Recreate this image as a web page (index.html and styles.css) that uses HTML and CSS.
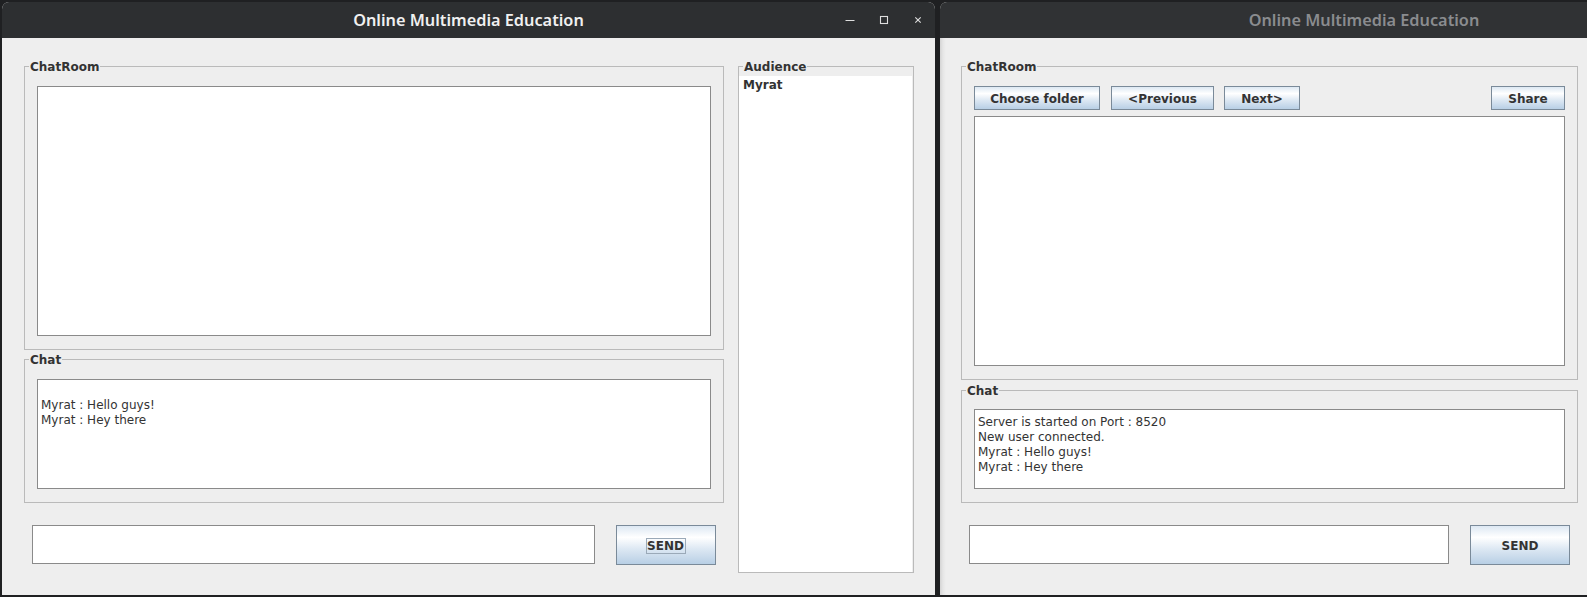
FILE: index.html
```html
<!DOCTYPE html>
<html lang="en">
<head>
<meta charset="utf-8">
<title>Online Multimedia Education</title>
<link rel="stylesheet" href="styles.css">
</head>
<body>
<div class="desktop">
  <section class="window active">
    <header class="titlebar">
      <span class="title">Online Multimedia Education</span>
      <div class="controls">
        <span class="ctl"><svg width="12" height="12" viewBox="0 0 12 12"><path d="M1.5 6.5h9" stroke="#dedede" stroke-width="1.2"/></svg></span>
        <span class="ctl"><svg width="12" height="12" viewBox="0 0 12 12"><rect x="2.5" y="2.5" width="7" height="7" fill="none" stroke="#dedede" stroke-width="1.1"/></svg></span>
        <span class="ctl"><svg width="12" height="12" viewBox="0 0 12 12"><path d="M3.3 3.3l5.4 5.4M8.7 3.3l-5.4 5.4" stroke="#dedede" stroke-width="1.1"/></svg></span>
      </div>
    </header>
    <div class="client client-left">
      <div class="main-col main-left">
        <fieldset class="group room">
          <legend>ChatRoom</legend>
          <div class="group-body">
            <div class="textarea board"></div>
          </div>
        </fieldset>
        <fieldset class="group chat">
          <legend>Chat</legend>
          <div class="group-body">
            <div class="textarea log log-left">
              <div class="line">&nbsp;</div>
              <div class="line">Myrat : Hello guys!</div>
              <div class="line">Myrat : Hey there</div>
            </div>
          </div>
        </fieldset>
        <div class="input-row">
          <div class="field"></div>
          <button class="btn send"><span class="focus">SEND</span></button>
        </div>
      </div>
      <fieldset class="group audience">
        <legend>Audience</legend>
        <ul class="list"><li>Myrat</li></ul>
      </fieldset>
    </div>
  </section>

  <section class="window inactive">
    <header class="titlebar">
      <span class="title">Online Multimedia Education</span>
      <div class="controls"></div>
    </header>
    <div class="client client-right">
      <div class="main-col main-right">
        <fieldset class="group room">
          <legend>ChatRoom</legend>
          <div class="group-body">
            <div class="toolbar">
              <button class="btn tool choose">Choose folder</button>
              <button class="btn tool prev">&lt;Previous</button>
              <button class="btn tool next">Next&gt;</button>
              <button class="btn tool share">Share</button>
            </div>
            <div class="textarea board board-right"></div>
          </div>
        </fieldset>
        <fieldset class="group chat chat-right">
          <legend>Chat</legend>
          <div class="group-body body-chat-right">
            <div class="textarea log log-right">
              <div class="line">Server is started on Port : 8520</div>
              <div class="line">New user connected.</div>
              <div class="line">Myrat : Hello guys!</div>
              <div class="line">Myrat : Hey there</div>
            </div>
          </div>
        </fieldset>
        <div class="input-row">
          <div class="field"></div>
          <button class="btn send"><span class="nofocus">SEND</span></button>
        </div>
      </div>
    </div>
  </section>
</div>
</body>
</html>
```

FILE: styles.css
```css
* { box-sizing: border-box; }

html, body {
  margin: 0;
  padding: 0;
  width: 1587px;
  height: 597px;
  overflow: hidden;
  background: #1f2022;
  font-family: "DejaVu Sans", Verdana, sans-serif;
  font-size: 12px;
  color: #333;
}

.desktop {
  display: flex;
  gap: 5px;
  padding: 2px 0 0 2px;
  height: 597px;
}

.window {
  flex: none;
  display: flex;
  flex-direction: column;
  height: 593px;
  background: #eeeeee;
  border-radius: 7px 7px 0 0;
  overflow: hidden;
}

.window.active { width: 933px; }
.window.inactive {
  width: 848px;
  background: linear-gradient(to right, #d4d4d4 0, #e6e6e6 3px, #eeeeee 6px, #eeeeee 100%);
}

.titlebar {
  flex: none;
  height: 36px;
  display: grid;
  grid-template-columns: 1fr auto 1fr;
  align-items: center;
  background: #2d2f31;
}

.inactive .titlebar { background: #303234; }

.title {
  grid-column: 2;
  font-family: "Noto Sans", "Open Sans", sans-serif;
  font-weight: 600;
  font-size: 16.3px;
  color: #f0f0f0;
  white-space: nowrap;
}

.inactive .title { color: #8a8c8f; }

.controls {
  grid-column: 3;
  justify-self: end;
  display: flex;
  height: 36px;
}

.ctl {
  width: 34px;
  height: 36px;
  display: flex;
  align-items: center;
  justify-content: center;
}

.client {
  flex: 1;
  display: flex;
  padding: 21px 21px 22px 22px;
  gap: 14px;
}

.client-right { padding: 21px 0 22px 21px; }

.main-col {
  display: flex;
  flex-direction: column;
}

.main-left { width: 700px; }
.main-right { width: 617px; }

.group {
  margin: 0;
  padding: 0;
  border: 1px solid #bababa;
  min-width: 0;
}

.group legend {
  margin-left: 4px;
  padding: 2px 1px 0;
  font-weight: bold;
  font-size: 12px;
  line-height: 12px;
  color: #333;
}

.group-body { padding: 13px 12px 13px; }

.chat { margin-top: 2px; }
.chat-right { margin-top: 3px; }
.body-chat-right { padding-top: 12px; }

.textarea {
  background: #fff;
  border: 1px solid #8a8a8a;
}

.board { height: 250px; }

.log { height: 110px; padding: 3px 3px; }
.log-right { height: 80px; padding-top: 5px; }

.line {
  line-height: 15px;
  height: 15px;
  color: #333;
  white-space: pre;
}

.toolbar {
  display: flex;
  height: 24px;
  margin-bottom: 6px;
}

.btn {
  font-family: "DejaVu Sans", Verdana, sans-serif;
  font-weight: bold;
  font-size: 12px;
  color: #333;
  border: 1px solid #7a8a99;
  background: linear-gradient(to bottom, #dde8f3 0%, #ffffff 30%, #dde8f3 60%, #b8cfe5 100%);
  padding: 0;
  margin: 0;
  border-radius: 0;
}

.tool { height: 24px; padding-top: 1px; }
.choose { width: 126px; margin-right: 11px; }
.prev { width: 103px; margin-right: 10px; }
.next { width: 76px; }
.share { width: 74px; margin-left: auto; }

.input-row {
  display: flex;
  align-items: flex-start;
  gap: 21px;
  margin-top: 22px;
  padding: 0 8px;
}

.field {
  flex: 1;
  height: 39px;
  background: #fff;
  border: 1px solid #8a8a8a;
}

.send {
  width: 100px;
  height: 40px;
  padding-top: 1px;
}

.focus {
  display: inline-block;
  border: 1px solid #9aa9b8;
  line-height: 14px;
  padding: 0 1px 0 0;
}

.nofocus { line-height: 14px; }

.audience {
  flex: 1;
  display: flex;
  flex-direction: column;
}

.list {
  flex: 1;
  list-style: none;
  margin: 3px 1px 0 0;
  padding: 0;
  background: #fff;
}

.list li {
  font-weight: bold;
  line-height: 17px;
  padding: 1px 0 0 4px;
  color: #333;
}
```
